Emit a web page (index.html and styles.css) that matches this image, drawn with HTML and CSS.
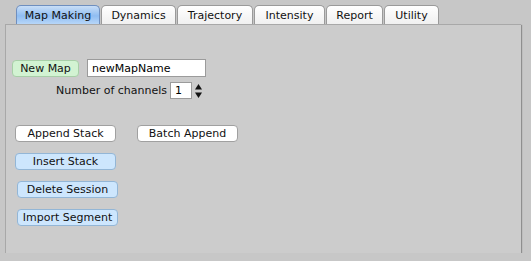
FILE: index.html
```html
<!DOCTYPE html>
<html lang="en">
<head>
    <meta charset="UTF-8">
    <title>Map Making</title>
    <link rel="stylesheet" href="styles.css">
</head>
<body>
    <div class="window">
        <div class="tabs">
            <div class="tab active t-map">Map Making</div>
            <div class="tab t-dyn">Dynamics</div>
            <div class="tab t-traj">Trajectory</div>
            <div class="tab t-int">Intensity</div>
            <div class="tab t-rep">Report</div>
            <div class="tab t-util">Utility</div>
        </div>

        <div class="panel">
            <div class="row new-map">
                <button class="btn green">New Map</button>
                <input type="text" class="name-input" value="newMapName">
            </div>
            <div class="row channels">
                <label>Number of channels</label>
                <input type="text" class="num-input" value="1">
                <span class="spinner">
                    <svg width="9" height="16" viewBox="0 0 9 16">
                        <path d="M4.5 1 L8 6.5 L1 6.5 Z" fill="#111"/>
                        <path d="M4.5 15 L8 9.5 L1 9.5 Z" fill="#111"/>
                    </svg>
                </span>
            </div>
            <div class="row append">
                <button class="btn white wide">Append Stack</button>
                <button class="btn white wide">Batch Append</button>
            </div>
            <div class="stack">
                <button class="btn blue wide">Insert Stack</button>
                <button class="btn blue wide shift">Delete Session</button>
                <button class="btn blue wide shift">Import Segment</button>
            </div>
        </div>
    </div>
</body>
</html>
```

FILE: styles.css
```css
body {
    margin: 0;
    background: #c7c7c7;
    font-family: "DejaVu Sans", "Noto Sans", sans-serif;
    font-size: 11px;
    color: #111;
}
.window {
    padding: 5px 0 0 5px;
}
.tabs {
    display: flex;
    margin-left: 11px;
    height: 19px;
}
.tab {
    box-sizing: border-box;
    height: 19px;
    text-align: center;
    white-space: nowrap;
    line-height: 19px;
    border: 1px solid #9a9a9a;
    border-bottom: none;
    border-radius: 5px 5px 0 0;
    background: linear-gradient(#ffffff, #f0f0f0);
    margin-right: 1px;
}
.t-map { width: 84px; }
.t-dyn { width: 75px; }
.t-traj { width: 76px; }
.t-int { width: 71px; }
.t-rep { width: 57px; }
.t-util { width: 55px; }
.tab.active {
    border-color: #6f8fbf;
    background: linear-gradient(#c9def7, #8fbdf2 55%, #b7d6f8);
}
.panel {
    box-sizing: border-box;
    width: 516px;
    height: 229px;
    background: #cccccc;
    border-left: 1px solid #a8a8a8;
    border-top: 1px solid #a8a8a8;
    box-shadow: 1px 1px 1px #8e8e8e;
    padding: 34px 0 0 6px;
}
.row {
    display: flex;
    align-items: center;
}
.btn {
    box-sizing: border-box;
    height: 17px;
    font-family: inherit;
    font-size: 11px;
    line-height: 15px;
    padding: 0;
    white-space: nowrap;
    text-align: center;
    border-radius: 4px;
    color: #111;
}
.green {
    background: #d2f3d2;
    border: 1px solid #a8cfa8;
    width: 67px;
}
.white {
    background: #fff;
    border: 1px solid #a0a0a0;
}
.blue {
    background: #cde6fd;
    border: 1px solid #93b6d6;
}
.wide {
    width: 101px;
}
.name-input {
    box-sizing: border-box;
    width: 119px;
    height: 18px;
    margin-left: 8px;
    border: 1px solid #9b9b9b;
    padding: 1px 4px;
    font-family: inherit;
    font-size: 11px;
    background: #fff;
}
.channels {
    margin-top: 5px;
    padding-left: 44px;
}
.num-input {
    box-sizing: border-box;
    width: 22px;
    height: 17px;
    margin-left: 3px;
    border: 1px solid #9b9b9b;
    padding: 0 4px;
    font-family: inherit;
    font-size: 11px;
    background: #fff;
}
.spinner {
    display: flex;
    margin-left: 2px;
}
.append {
    margin-top: 26px;
    padding-left: 3px;
    gap: 21px;
}
.stack {
    display: flex;
    flex-direction: column;
    align-items: flex-start;
    gap: 11px;
    margin-top: 11px;
    padding-left: 3px;
}
.shift {
    margin-left: 2px;
}
```
